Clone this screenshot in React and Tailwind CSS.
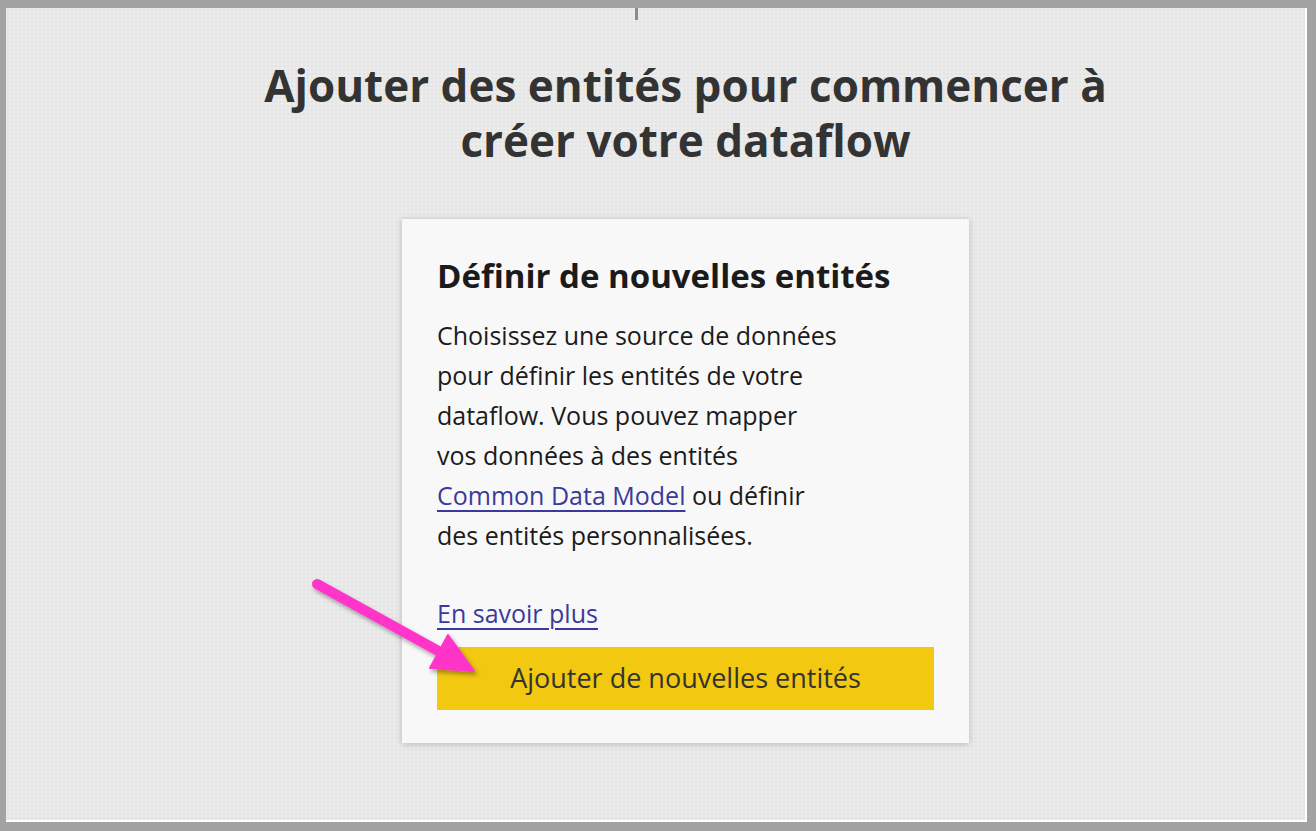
import React from 'react';

function Arrow() {
  return (
    <svg className="absolute left-0 top-0 pointer-events-none" width="520" height="720" viewBox="0 0 520 720">
      <defs>
        <filter id="arrowShadow" x="-20%" y="-20%" width="140%" height="140%">
          <feDropShadow dx="2" dy="3" stdDeviation="2" floodColor="#000" floodOpacity="0.35" />
        </filter>
      </defs>
      <g filter="url(#arrowShadow)" fill="#ff36c9" stroke="#ff36c9">
        <line x1="317" y1="584" x2="442" y2="653" strokeWidth="10" strokeLinecap="round" />
        <polygon points="474,671 430,668 448,635" strokeWidth="2" strokeLinejoin="round" />
      </g>
    </svg>
  );
}

export default function App() {
  return (
    <div className="w-full h-[831px] bg-[#a3a3a3] pt-2 pl-1.5 pr-[9px] pb-[9px] font-['Open_Sans',sans-serif]">
      <div className="relative h-full w-full border-r-2 border-b-2 border-white bg-[#ebebeb] bg-[radial-gradient(#e2e2e2_1px,transparent_1px)] bg-[length:4px_4px] overflow-hidden">
        {/* little tick at the top edge */}
        <div className="absolute left-[629px] top-0 w-[3px] h-[12px] bg-[#8a8a8a] blur-[0.5px]" />

        <div className="flex flex-col items-center pl-[60px] pt-[50px]">
          <h1 className="text-center text-[44px] leading-[55px] font-bold text-[#333333]">
            Ajouter des entités pour commencer à
            <br />
            créer votre dataflow
          </h1>

          <div className="mt-[51px] w-[567px] bg-[#f8f8f8] shadow-[0_1px_6px_rgba(0,0,0,0.22)] px-[35px] pt-[37px] pb-[33px]">
            <h2 className="text-[33px] leading-[40px] font-bold text-[#1b1b1b]">Définir de nouvelles entités</h2>
            <p className="mt-[19px] text-[25px] leading-[40px] text-[#1b1b1b]">
              Choisissez une source de données
              <br />
              pour définir les entités de votre
              <br />
              dataflow. Vous pouvez mapper
              <br />
              vos données à des entités
              <br />
              <a href="#" className="text-[#3a3a9c] underline underline-offset-[5px] decoration-[1.5px]">Common Data Model</a> ou définir
              <br />
              des entités personnalisées.
            </p>
            <div className="mt-[38px] text-[25px] leading-[40px]">
              <a href="#" className="text-[#3a3a9c] underline underline-offset-[5px] decoration-[1.5px]">En savoir plus</a>
            </div>
            <button className="mt-[14px] w-full h-[63px] bg-[#f2c811] text-[27px] text-[#333333] flex items-center justify-center">
              Ajouter de nouvelles entités
            </button>
          </div>
        </div>

        <div className="absolute -left-1.5 -top-2">
          <Arrow />
        </div>
      </div>
    </div>
  );
}
